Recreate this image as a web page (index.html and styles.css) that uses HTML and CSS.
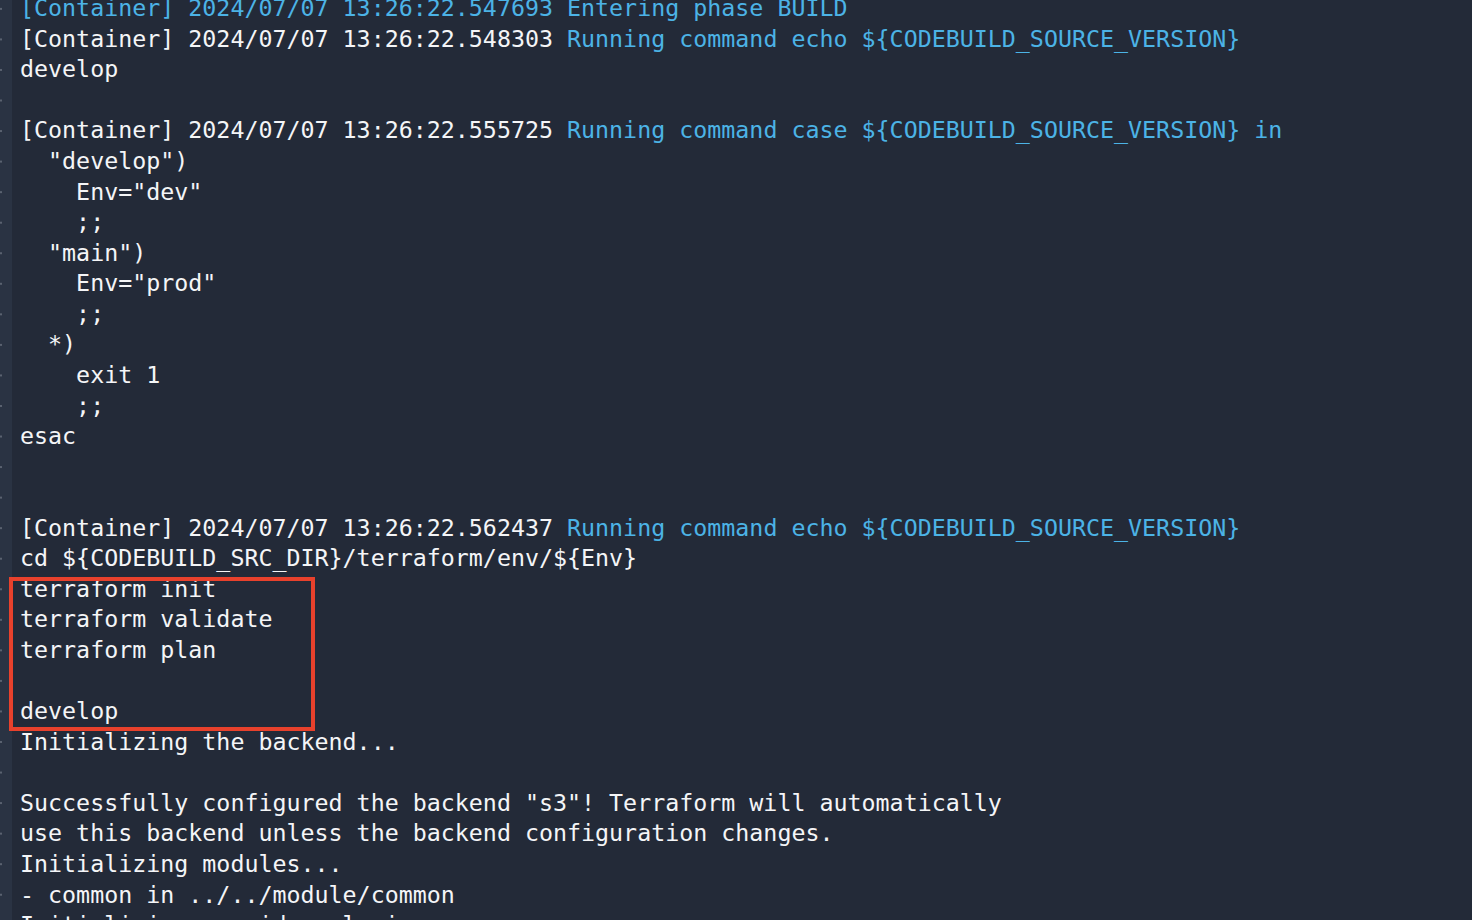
FILE: index.html
```html
<!DOCTYPE html>
<html>
<head>
<meta charset="utf-8">
<link rel="stylesheet" href="styles.css">
</head>
<body>
<div class="term">
  <div class="gutter"></div>
  <div class="content">
<pre class="log"><span class="b">[Container] 2024/07/07 13:26:22.547693 Entering phase BUILD</span>
[Container] 2024/07/07 13:26:22.548303 <span class="b">Running command echo ${CODEBUILD_SOURCE_VERSION}</span>
develop

[Container] 2024/07/07 13:26:22.555725 <span class="b">Running command case ${CODEBUILD_SOURCE_VERSION} in</span>
  "develop")
    Env="dev"
    ;;
  "main")
    Env="prod"
    ;;
  *)
    exit 1
    ;;
esac


[Container] 2024/07/07 13:26:22.562437 <span class="b">Running command echo ${CODEBUILD_SOURCE_VERSION}</span>
cd ${CODEBUILD_SRC_DIR}/terraform/env/${Env}
terraform init
terraform validate
terraform plan

develop
Initializing the backend...

Successfully configured the backend "s3"! Terraform will automatically
use this backend unless the backend configuration changes.
Initializing modules...
- common in ../../module/common
Initializing provider plugins...</pre>
    <div class="highlight"></div>
  </div>
</div>
</body>
</html>
```
FILE: styles.css
```css
html, body {
  margin: 0;
  padding: 0;
  background: #232a38;
  height: 100%;
  overflow: hidden;
}
.term {
  display: flex;
  height: 920px;
}
.gutter {
  width: 12px;
  flex: 0 0 12px;
  background-color: #2a3343;
  background-image: repeating-linear-gradient(to bottom, transparent 0, transparent 7.5px, #5a6270 7.5px, #5a6270 9.5px, transparent 9.5px, transparent 30.56px);
  background-size: 2px 30.56px;
  background-repeat: repeat-y;
  background-position: 0 0;
}
.content {
  position: relative;
  flex: 1;
  padding-left: 8px;
}
.log {
  margin: -6.8px 0 0 0;
  font-family: "DejaVu Sans Mono", "Liberation Mono", monospace;
  font-size: 23.3px;
  line-height: 30.56px;
  color: #f4f5f7;
  white-space: pre;
}
.b {
  color: #4cb3e6;
}
.highlight {
  position: absolute;
  left: -3px;
  top: 577px;
  width: 298px;
  height: 146px;
  border: 4px solid #e8412c;
}
```
